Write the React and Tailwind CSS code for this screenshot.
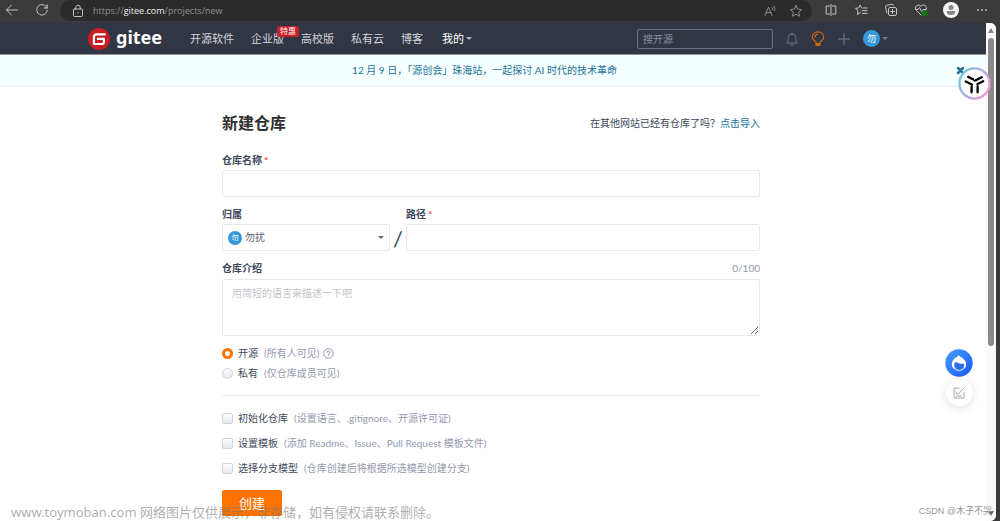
import React from "react";

const iconBox = "h-[14px] w-[14px]";

function Stroke({ className = iconBox, viewBox = "0 0 14 14", width = 1, children }) {
  return (
    <svg aria-hidden="true" viewBox={viewBox} className={className} fill="none" stroke="currentColor" strokeWidth={width} strokeLinecap="round" strokeLinejoin="round">
      {children}
    </svg>
  );
}

function Caret({ className }) {
  return (
    <svg aria-hidden="true" viewBox="0 0 6 3" className={className} fill="currentColor">
      <path d="M0 0h6L3 3z" />
    </svg>
  );
}

function BrowserBar() {
  return (
    <div className="flex h-[23px] shrink-0 items-start bg-[#3b3b3b] pr-1 text-[#c4c4c4]">
      <div className="flex h-5 w-[60px] shrink-0 items-center gap-4 pl-[5px]">
        <button type="button" aria-label="后退">
          <Stroke>
            <path d="M12.500 7h-11M6.500 2l-5 5 5 5" />
          </Stroke>
        </button>
        <button type="button" aria-label="刷新">
          <Stroke>
            <path d="M12 5A5.300 5.300 0 1 0 12.300 7.200M12.200 1.800V5H9" />
          </Stroke>
        </button>
      </div>
      <div className="flex h-[21px] min-w-0 flex-1 items-center rounded-full bg-[#2b2b2b] pl-[11px] pr-[9px]">
        <Stroke>
          <rect x="2.500" y="5" width="9" height="7.500" rx="1" />
          <path d="M4.800 5V3.400a2.200 2.200 0 0 1 4.400 0V5M7 8.500v.5" />
        </Stroke>
        <p className="ml-2 flex-1 whitespace-nowrap font-['Open_Sans',sans-serif] text-[9px] leading-5 text-[#929292]">
          https://<span className="text-[#f0f0f0]">gitee.com</span>/projects/new
        </p>
        <button type="button" aria-label="大声朗读" className="mr-3 text-[#8d8d8d]">
          <Stroke>
            <path d="M2 11.500 5.500 3 9 11.500M3.200 8.600h4.600M9.200 3.600q.9.9.6 2.200M11 2.400q1.600 1.800 1 4" />
          </Stroke>
        </button>
        <button type="button" aria-label="收藏" className="text-[#8d8d8d]">
          <Stroke>
            <path d="m7 1.500 1.700 3.600 3.900.5-2.900 2.700.8 3.900L7 10.300l-3.500 1.900.8-3.900L1.400 5.600l3.900-.5z" />
          </Stroke>
        </button>
      </div>
      <div className="ml-1 flex h-5 shrink-0">
        <button type="button" aria-label="分屏" className="grid w-[30px] place-items-center">
          <Stroke>
            <path d="M5.500 3H2.200v8h3.300M8.500 3h3.300v8H8.500M7 1.500v11" />
          </Stroke>
        </button>
        <button type="button" aria-label="收藏夹" className="grid w-[30px] place-items-center">
          <Stroke>
            <path d="M7.500 4.900 6.200 2 4.800 4.900l-3.300.4L4 7.600l-.6 3.700 2.800-1.600M9 5h4M8 7.700h5M8.500 10.400H13" />
          </Stroke>
        </button>
        <button type="button" aria-label="集锦" className="grid w-[30px] place-items-center">
          <Stroke>
            <rect x="4.500" y="4.500" width="8" height="8" rx="1.500" />
            <path d="M8.500 6.500v4M6.500 8.500h4M2.900 9.800 1.600 4q-.3-1.400 1-1.700L8 1.300q1.300-.2 1.600 1" />
          </Stroke>
        </button>
        <button type="button" aria-label="浏览器概要" className="grid w-[30px] place-items-center">
          <Stroke>
            <path d="M7 12 2.200 7.200A3 3 0 0 1 7 3.200a3 3 0 0 1 4.900 3.800M1.500 6.500H4L5.500 4.500 7.500 8.500 9 6.500h3" />
            <circle cx="10.500" cy="10" r="2.900" fill="#107c10" stroke="none" />
          </Stroke>
        </button>
        <button type="button" aria-label="个人资料" className="grid w-[30px] place-items-center">
          <svg aria-hidden="true" viewBox="0 0 16 16" className="h-4 w-4">
            <circle cx="8" cy="8" r="8" fill="#f5f5f5" />
            <circle cx="8" cy="5.400" r="2.500" fill="#858585" />
            <path d="M3.800 9h8.400q.6 4-4.200 4T3.800 9z" fill="#858585" />
          </svg>
        </button>
        <button type="button" aria-label="更多" className="grid w-[30px] place-items-center">
          <svg aria-hidden="true" viewBox="0 0 14 14" className={iconBox} fill="currentColor">
            <circle cx="4" cy="7" r="0.900" />
            <circle cx="8" cy="7" r="0.900" />
            <circle cx="12" cy="7" r="0.900" />
          </svg>
        </button>
      </div>
    </div>
  );
}

function Header() {
  return (
    <header className="shrink-0 border-b border-[#8b939b] bg-[#313644] pr-[10px]">
      <div className="mx-auto flex h-[31px] max-w-[800px] items-center text-[11px] text-[#d3d5da]">
        <a href="#home" className="flex items-center gap-[6px] text-white">
          <svg aria-hidden="true" viewBox="0 0 22 22" className="h-[22px] w-[22px]">
            <circle cx="11" cy="11" r="11" fill="#c71d23" />
            <path d="M16.500 6.300H8.600Q5.900 6.300 5.900 9v7h7.700q2.300 0 2.300-2.300v-2.900H10" fill="none" stroke="#fff" strokeWidth="2.200" strokeLinecap="square" strokeLinejoin="round" />
          </svg>
          <span className="w-[45px] pb-1 font-['Noto_Sans',sans-serif] text-[18px] font-bold leading-6">gitee</span>
        </a>
        <nav className="ml-[29px] flex items-center gap-[17px] whitespace-nowrap leading-5">
          <a href="#explore">开源软件</a>
          <a href="#enterprise" className="relative">
            企业版
            <span className="absolute -top-[3px] left-[26px] rounded-[2px] bg-[#c71d23] px-[3px] text-[8px] leading-[11px] text-white">特惠</span>
          </a>
          <a href="#education">高校版</a>
          <a href="#cloud">私有云</a>
          <a href="#blog">博客</a>
          <a href="#mine" className="ml-[2px] flex items-center gap-[2px] text-white">
            我的
            <Caret className="h-[3px] w-[6px] text-[#b9bcc3]" />
          </a>
        </nav>
        <input type="search" aria-label="搜开源" placeholder="搜开源" className="ml-auto h-5 w-[136px] rounded-[2px] border border-[#6a7080] bg-transparent px-[5px] text-[10px] text-white outline-none placeholder:text-[#8c92a4]" />
        <button type="button" aria-label="通知" className="ml-3 text-[#68728c]">
          <Stroke>
            <path d="M1.800 11h10.400M3 11V6a4 4 0 0 1 8 0v5M7 2V.800M5.800 13h2.400" />
          </Stroke>
        </button>
        <button type="button" aria-label="动态" className="ml-3 text-[#cf6413]">
          <Stroke className="h-4 w-[14px]" viewBox="0 0 14 16" width={1.2}>
            <path d="M5 12.500v-1.300C3 9.900 1.300 8.600 1.300 6a5.700 5.200 0 0 1 11.400 0c0 2.600-1.700 3.900-3.700 5.200v1.300zM4 6q0-2.400 2.500-2.900" />
            <path d="M5 13h4v1.500H5z" fill="currentColor" />
          </Stroke>
        </button>
        <button type="button" aria-label="新建" className="ml-3 text-[#747b8c]">
          <Stroke>
            <path d="M7 1.500v11M1.500 7h11" />
          </Stroke>
        </button>
        <button type="button" aria-label="用户菜单" className="ml-3 flex items-center gap-[2px]">
          <span className="grid h-[17px] w-[17px] place-items-center rounded-full bg-[#3498db] text-[9px] leading-none text-white">勿</span>
          <Caret className="h-[3px] w-[6px] text-[#747b8c]" />
        </button>
      </div>
    </header>
  );
}

const labelText = "block text-[10px] font-bold leading-[18px] text-[#40485b]";

function Field({ id, label, required }) {
  return (
    <div>
      <label htmlFor={id} className={labelText}>
        {label}
        {required && <span className="ml-[2px] text-[#f04134]">*</span>}
      </label>
      <input id={id} type="text" required={required} className="mt-[1px] block h-[27px] w-full rounded-[2px] border border-[#e7e8ea] px-2 text-[10px] outline-none" />
    </div>
  );
}

function Choice({ type, name, label, hint, checked, children }) {
  const look =
    type === "radio"
      ? "rounded-full checked:border-[3px] checked:border-[#fe7300] checked:bg-none"
      : "rounded-[2px]";
  return (
    <div className="flex h-5 items-center text-[10px]">
      <label className="flex items-center whitespace-nowrap text-[#40485b]">
        <input type={type} name={name} defaultChecked={checked} className={look + " mr-[5px] h-[11px] w-[11px] shrink-0 appearance-none border border-[#d0d3d8] bg-white bg-linear-to-b from-white to-[#e6e8ec]"} />
        <span>{label}</span>
        <span className="ml-[6px] text-[#9398ae]">{hint}</span>
      </label>
      {children}
    </div>
  );
}

function RepoForm() {
  return (
    <main className="pr-1">
      <form className="mx-auto max-w-[538px] pt-6">
        <div className="flex items-center justify-between">
          <h1 className="text-[16px] font-bold leading-6 text-[#303030]">新建仓库</h1>
          <p className="text-[10px] text-[#40485b]">
            在其他网站已经有仓库了吗？
            <a href="#import" className="text-[#227299]">点击导入</a>
          </p>
        </div>
        <div className="mt-4">
          <Field id="repo-name" label="仓库名称" required />
        </div>
        <div className="mt-2 grid grid-cols-[168px_16px_1fr]">
          <div>
            <label htmlFor="owner" className={labelText}>归属</label>
            <div className="relative mt-[1px]">
              <select id="owner" className="block h-[27px] w-full appearance-none rounded-[2px] border border-[#e7e8ea] bg-white pl-[22px] text-[10px] text-[#565e70] outline-none">
                <option>勿扰</option>
              </select>
              <span aria-hidden="true" className="pointer-events-none absolute inset-y-0 left-[6px] my-auto grid h-[14px] w-[14px] place-items-center rounded-full bg-[#3498db] text-[7px] leading-none text-white">勿</span>
              <Caret className="pointer-events-none absolute inset-y-0 right-[6px] my-auto h-[3px] w-[6px] text-[#5b6575]" />
            </div>
          </div>
          <span className="self-end text-center text-[22px] leading-6 text-[#40485b]">/</span>
          <Field id="repo-path" label="路径" required />
        </div>
        <div className="mt-2 flex items-center justify-between">
          <label htmlFor="intro" className={labelText}>仓库介绍</label>
          <span className="text-[10px] text-[#9398ae]">0/100</span>
        </div>
        <textarea id="intro" placeholder="用简短的语言来描述一下吧" className="mt-[2px] block h-[57px] w-full rounded-[2px] border border-[#e7e8ea] px-[9px] py-[5px] text-[10px] leading-4 outline-none placeholder:text-[#c3c4c9]" />
        <div className="mt-[7px]">
          <Choice type="radio" name="visibility" label="开源" hint="(所有人可见)" checked>
            <button type="button" aria-label="可见性说明" className="ml-1 text-[#9398ae]">
              <Stroke className="h-[11px] w-[11px]" viewBox="0 0 11 11">
                <circle cx="5.500" cy="5.500" r="4.800" />
                <path d="M4 4.500q0-1.500 1.500-1.500T7 4.400q0 .8-1.500 1.600v.4M5.500 8v.1" />
              </Stroke>
            </button>
          </Choice>
          <Choice type="radio" name="visibility" label="私有" hint="(仅仓库成员可见)" />
        </div>
        <hr className="mt-3 border-[#ececee]" />
        <div className="mt-3 flex flex-col gap-[5px]">
          <Choice type="checkbox" name="init" label="初始化仓库" hint="(设置语言、.gitignore、开源许可证)" />
          <Choice type="checkbox" name="template" label="设置模板" hint="(添加 Readme、Issue、Pull Request 模板文件)" />
          <Choice type="checkbox" name="branch" label="选择分支模型" hint="(仓库创建后将根据所选模型创建分支)" />
        </div>
        <button type="submit" className="mt-3 h-[26px] w-[60px] rounded-[2px] bg-[#fe7300] text-[13px] leading-5 text-white">创建</button>
      </form>
    </main>
  );
}

function FloatingTools() {
  return (
    <>
      <button type="button" aria-label="扩展工具" className="absolute right-[9px] top-[67px]">
        <svg aria-hidden="true" viewBox="0 0 34 34" className="h-[33px] w-[33px]">
          <defs>
            <linearGradient id="ring" x1="0" y1="0.300" x2="1" y2="0.800">
              <stop offset="0" stopColor="#6fc8d8" />
              <stop offset="0.500" stopColor="#b5a8e6" />
              <stop offset="1" stopColor="#f09ac8" />
            </linearGradient>
          </defs>
          <circle cx="17" cy="17" r="15.500" fill="#fff" stroke="url(#ring)" strokeWidth="2.400" />
          <g fill="none" stroke="#000" strokeWidth="2.400" strokeLinecap="round">
            <path d="M10.500 10.200 15.500 12.600M8 15l6.200 3M18.300 13.600 24.500 10.600M20 17.600l6-3M14 20.500v5.500M20.200 20v6" />
            <path d="M15.500 12.600 17 14.400l1.300-.8M14.200 18v2.500" strokeWidth="1.400" />
          </g>
        </svg>
      </button>
      <div className="absolute right-[27px] top-[349px] flex flex-col items-center gap-[2px]">
        <button type="button" aria-label="智能助手">
          <svg aria-hidden="true" viewBox="0 0 28 28" className="h-7 w-7">
            <defs>
              <linearGradient id="assistant" x1="0" y1="0" x2="1" y2="1">
                <stop offset="0" stopColor="#4a9dfb" />
                <stop offset="1" stopColor="#1558f5" />
              </linearGradient>
            </defs>
            <circle cx="14" cy="14" r="13.700" fill="url(#assistant)" />
            <path d="M13.500 6q1.200 1.500 3.500 2.700 3.800 2.200 4.200 6.300.2 3-2.200 5H9q-2.400-2-2.200-5 .3-4.100 3.700-6.300Q12.600 7.500 13.500 6z" fill="#fff" />
            <path d="M9.300 16.300q0-3.300 2.400-3.300 1.300 2 7.400 1.700v2.300a4.900 4.900 0 0 1-9.800 0z" fill="#2b6cf0" />
            <path d="M9.500 18.500q1.500 3.200 4.700 3.200t4.700-3.200" fill="none" stroke="#a9cdfc" strokeWidth="1.200" />
          </svg>
        </button>
        <button type="button" aria-label="反馈" className="grid h-[27px] w-[27px] place-items-center rounded-full bg-white text-[#a0a5b2] shadow-[0_2px_10px_rgba(0,0,0,0.12)]">
          <Stroke className="h-3 w-3" viewBox="0 0 12 12">
            <path d="M6 1.200H1v9.800h10V5.500M11 1 5.500 6.800M3.300 5v1.800h2.200M3.300 9h5" />
          </Stroke>
        </button>
      </div>
    </>
  );
}

function Scrollbar() {
  return (
    <div aria-hidden="true" className="flex w-[10px] shrink-0 flex-col items-center bg-[#fafafa] py-[5px]">
      <svg viewBox="0 0 6 5" className="h-[5px] w-[6px]" fill="#858585">
        <path d="M3 0l3 5H0z" />
      </svg>
      <div className="mt-[5px] h-[308px] w-[6px] rounded-full bg-[#8a8a8a]" />
      <svg viewBox="0 0 6 5" className="mt-auto h-[5px] w-[6px]" fill="#686868">
        <path d="M3 5l3-5H0z" />
      </svg>
    </div>
  );
}

export default function App() {
  return (
    <div className="relative flex h-screen flex-col overflow-hidden bg-[#3b3b3b] font-['Lato','Noto_Sans_CJK_SC',sans-serif]">
      <BrowserBar />
      <div className="mr-1 flex min-h-0 flex-1 overflow-hidden rounded-r-[6px] bg-white">
        <div className="min-w-0 flex-1 overflow-hidden">
          <Header />
          <div className="flex h-8 items-center border-b border-[#e7eff5] bg-[#f6ffff] text-[10px] text-[#227299]">
            <a href="#event" className="ml-[26px] flex-1 pr-[13px] text-center">12 月 9 日，「源创会」珠海站，一起探讨 AI 时代的技术革命</a>
            <button type="button" aria-label="关闭" className="mr-[21px]">
              <Stroke className="h-[9px] w-[9px]" viewBox="0 0 9 9" width={2.5}>
                <path d="m2 2 5 5M7 2 2 7" />
              </Stroke>
            </button>
          </div>
          <RepoForm />
        </div>
        <Scrollbar />
      </div>
      <FloatingTools />
      <p className="pointer-events-none absolute bottom-0 left-[11px] whitespace-nowrap font-['Noto_Sans','Noto_Sans_CJK_SC',sans-serif] text-[13px] leading-[18px] text-[#777777]/60">
        www.toymoban.com 网络图片仅供展示，非存储，如有侵权请联系删除。
      </p>
      <p className="pointer-events-none absolute bottom-[2px] right-[8px] whitespace-nowrap font-['Liberation_Sans','Noto_Sans_CJK_SC',sans-serif] text-[9px] leading-4 text-[#999999]">CSDN @木子不哭</p>
    </div>
  );
}
